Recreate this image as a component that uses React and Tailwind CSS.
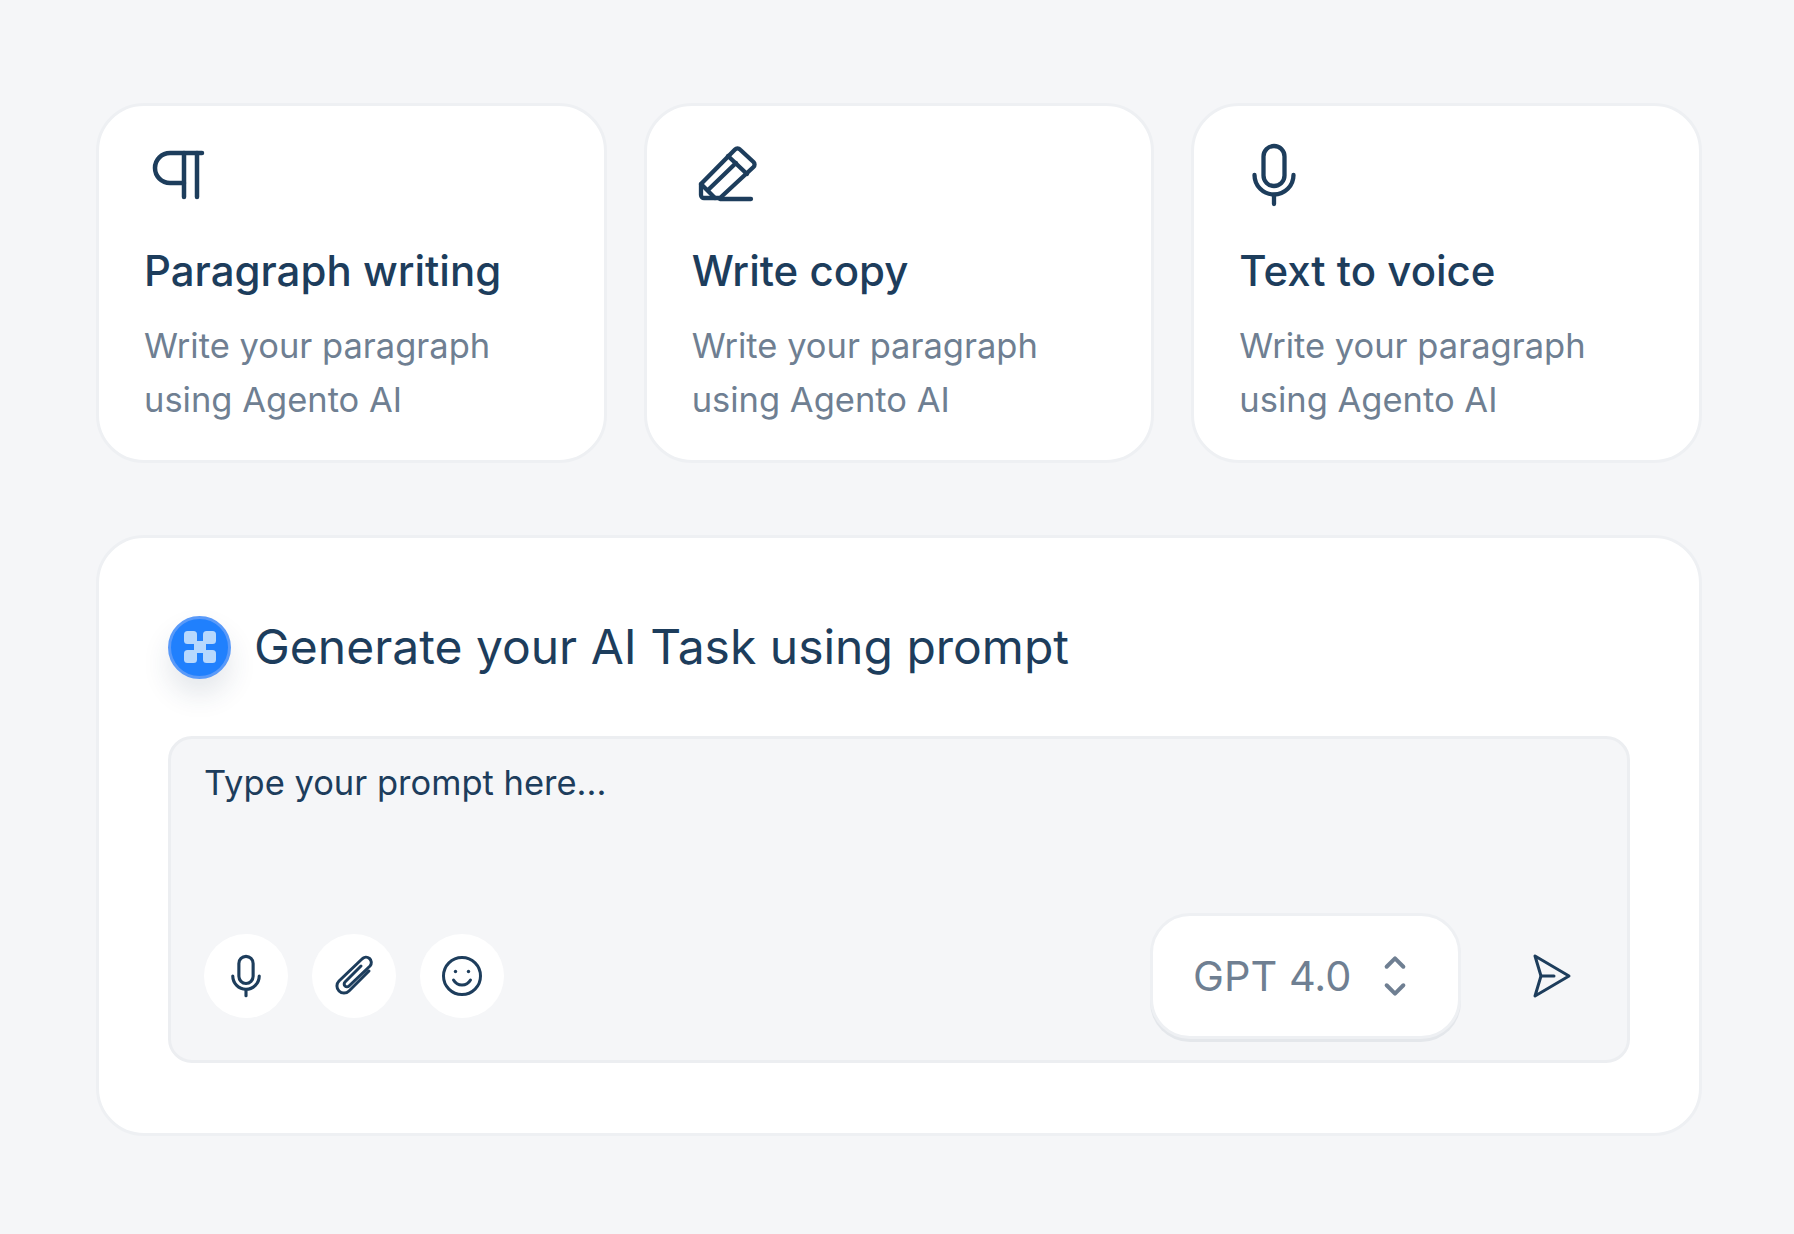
const navy = "#1d3d5c";

const ParagraphIcon = () => (
  <svg width="60" height="60" viewBox="0 0 60 60" fill="none" stroke={navy} strokeWidth="4.5" strokeLinecap="round" strokeLinejoin="round">
    <path d="M53 11H21a14.500 14.500 0 0 0 0 30H35" />
    <path d="M35 11v44M48 11v44" />
  </svg>
);

const PencilIcon = () => (
  <svg width="60" height="60" viewBox="-6 -6 60 60" className="overflow-visible" fill="none" stroke={navy} strokeWidth="4.3" strokeLinecap="round" strokeLinejoin="round">
    <path d="M-2 36 L32 1.500 a3.500 3.500 0 0 1 5 0 L50.500 14 a3.500 3.500 0 0 1 0 5 L17 50 H1 a3 3 0 0 1 -3 -3 Z" />
    <path d="M-2 36 L12 50" />
    <path d="M25 8 L44 26" />
    <path d="M5 42 L33 15" />
    <path d="M17 51 H48" />
  </svg>
);

const MicIcon = ({ width = 60, height = 60, box = "-2 0 60 60", stroke = 4.3 }) => (
  <svg width={width} height={height} viewBox={box} className="overflow-visible" fill="none" stroke={navy} strokeWidth={stroke} strokeLinecap="round" strokeLinejoin="round">
    <rect x="17.500" y="4" width="21" height="40" rx="10.500" />
    <path d="M8.500 33a19.500 19.500 0 0 0 39 0" />
    <path d="M28 53v9" />
  </svg>
);

const PaperclipIcon = () => (
  <svg width="42" height="42" viewBox="0 0 42 42" fill="none" stroke={navy} strokeWidth="3" strokeLinecap="round" strokeLinejoin="round">
    <path d="M36 16 L16 36 a6.500 6.500 0 0 1 -10 -10 L29 4 a5 5 0 0 1 8 7 L16 31 a2.500 2.500 0 0 1 -4 -4 L28 11" />
  </svg>
);

const SmileIcon = () => (
  <svg width="42" height="42" viewBox="0 0 42 42" fill="none" stroke={navy} strokeWidth="3" strokeLinecap="round" strokeLinejoin="round">
    <circle cx="21" cy="21" r="18.500" />
    <path d="M12.500 25c2 3.500 5 5 8.500 5s6.500-1.500 8.500-5" />
    <circle cx="14.500" cy="16.500" r="1.700" fill={navy} stroke="none" />
    <circle cx="27.500" cy="16.500" r="1.700" fill={navy} stroke="none" />
  </svg>
);

const SendIcon = () => (
  <svg width="44" height="48" viewBox="0 0 44 48" fill="none" stroke={navy} strokeWidth="3" strokeLinecap="round" strokeLinejoin="round">
    <path d="M4 4 L38 24 L4 44 L10 24 Z" />
    <path d="M10 24 H23" />
  </svg>
);

const cards = [
  { title: "Paragraph writing", Icon: ParagraphIcon },
  { title: "Write copy", Icon: PencilIcon },
  { title: "Text to voice", Icon: MicIcon },
];

const App = () => {
  return (
    <div className="min-h-[1234px] bg-[#f5f6f8] pl-[96px] pr-[92px] pt-[103px] font-['Inter',sans-serif]">
      <div className="grid grid-cols-3 gap-[37px]">
        {cards.map(({ title, Icon }) => (
          <div key={title} className="h-[360px] rounded-[48px] border-[3px] border-[#eef0f3] bg-white pl-[45px] pt-[36px]">
            <div className="ml-[5px]">
              <Icon />
            </div>
            <h3 className="mt-[39px] text-[42px] leading-[60px] font-[450] text-[#1d3d5c]">{title}</h3>
            <p className="mt-[18px] text-[34.500px] leading-[54px] text-[#6f7f92]">
              Write your paragraph
              <br />
              using Agento AI
            </p>
          </div>
        ))}
      </div>

      <div className="mt-[72px] h-[601px] rounded-[48px] border-[3px] border-[#eef0f3] bg-white pl-[69px] pr-[69px] pt-[77px]">
        <div className="flex items-center gap-[23px]">
          <div className="flex h-[63px] w-[63px] items-center justify-center rounded-full border-[3px] border-[#5a9af9] bg-[#2080fd] shadow-[0_16px_28px_rgba(29,61,92,0.12)]">
            <svg width="36" height="36" viewBox="0 0 36 36" fill="#b7d8fd">
              <rect x="2" y="2" width="13" height="13" rx="3.500" />
              <rect x="21" y="2" width="13" height="13" rx="3.500" />
              <rect x="2" y="21" width="13" height="13" rx="3.500" />
              <rect x="21" y="21" width="13" height="13" rx="3.500" />
              <rect x="12" y="12" width="12" height="12" />
            </svg>
          </div>
          <h2 className="text-[48px] leading-[64px] text-[#1d3d5c]">Generate your AI Task using prompt</h2>
        </div>

        <div className="mt-[57px] flex h-[327px] flex-col justify-between rounded-[24px] border-[3px] border-[#eceef1] bg-[#f5f6f8] pl-[33px] pr-[52px] pt-[20px] pb-[21px]">
          <p className="text-[34.500px] leading-[48px] text-[#1d3d5c]">Type your prompt here...</p>
          <div className="flex items-center justify-between">
            <div className="flex gap-[24px]">
              <button className="flex h-[84px] w-[84px] items-center justify-center rounded-full bg-white">
                <MicIcon width={38} height={44} box="0 1 56 64" stroke={4.600} />
              </button>
              <button className="flex h-[84px] w-[84px] items-center justify-center rounded-full bg-white">
                <PaperclipIcon />
              </button>
              <button className="flex h-[84px] w-[84px] items-center justify-center rounded-full bg-white">
                <SmileIcon />
              </button>
            </div>
            <div className="flex items-center gap-[70px]">
              <div className="flex h-[126px] w-[311px] items-center gap-[31px] rounded-[40px] border-[3px] border-[#eef0f3] bg-white pl-[40px] shadow-[0_3px_0_#e4e7eb]">
                <span className="text-[41.500px] leading-[56px] text-[#6f7f92]">GPT 4.0</span>
                <svg width="26" height="42" viewBox="0 0 28 44" fill="none" stroke="#6f7f92" strokeWidth="4.300" strokeLinecap="round" strokeLinejoin="round">
                  <path d="M5 12 L14 3 L23 12" />
                  <path d="M5 32 L14 41 L23 32" />
                </svg>
              </div>
              <SendIcon />
            </div>
          </div>
        </div>
      </div>
    </div>
  );
};

export default App;
